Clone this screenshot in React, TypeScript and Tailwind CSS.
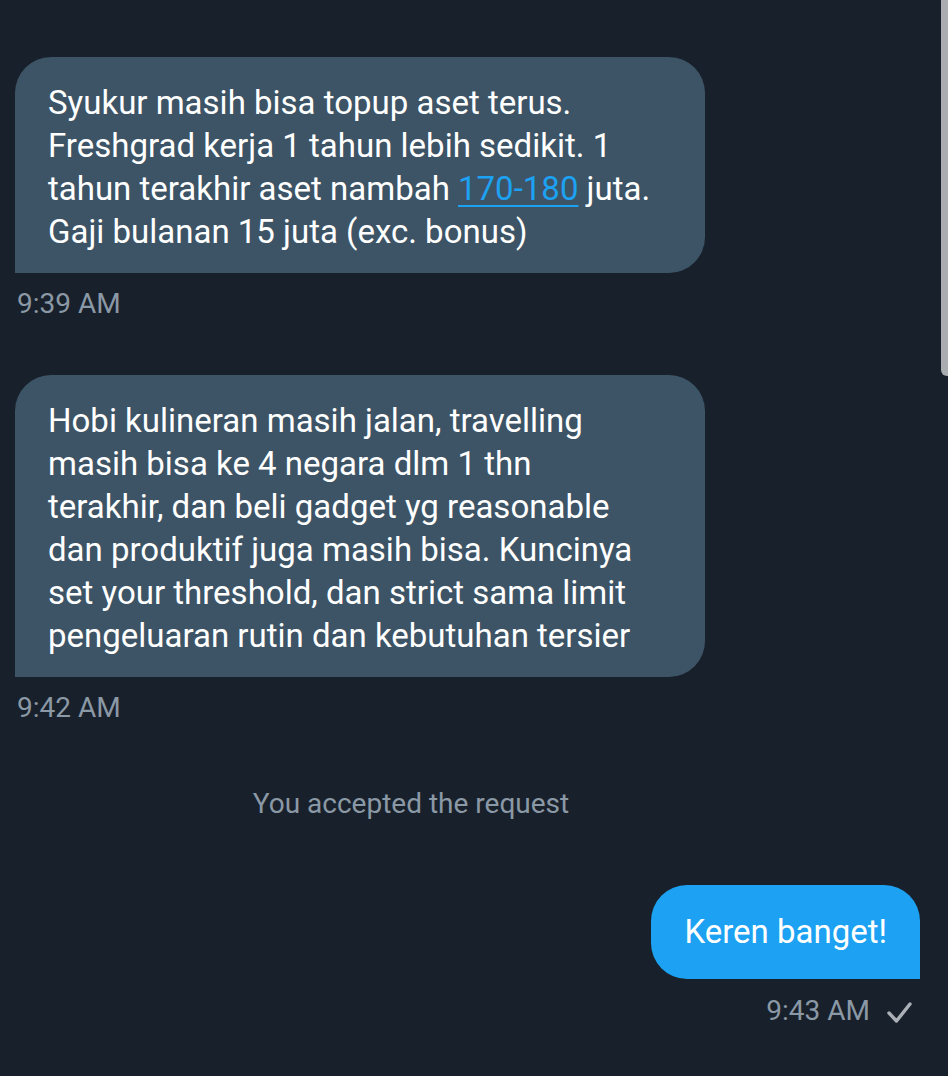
const font = { fontFamily: "Roboto, 'Noto Sans', sans-serif" };

function Incoming({ lines, time }: { lines: React.ReactNode[]; time: string }) {
  return (
    <div className="flex flex-col items-start">
      <div className="ml-[15px] w-[690px] rounded-[36px] rounded-bl-none bg-[#3d5466] pl-[33px] pr-[20px] pt-[24px] pb-[20px] text-[33px] leading-[43px] text-white">
        {lines.map((l, i) => (
          <div key={i} className="whitespace-nowrap">
            {l}
          </div>
        ))}
      </div>
      <div className="ml-[17px] mt-[13px] text-[28px] leading-[36px] text-[#8b98a5]">{time}</div>
    </div>
  );
}

export default function App() {
  return (
    <div style={font} className="relative h-[1076px] w-[948px] overflow-hidden bg-[#18212b]">
      {/* scroll indicator */}
      <div className="absolute right-0 top-0 h-[376px] w-[7px] rounded-bl-[6px] bg-[#a9acb0]" />

      <div className="flex flex-col pt-[57px]">
        <Incoming
          time="9:39 AM"
          lines={[
            "Syukur masih bisa topup aset terus.",
            "Freshgrad kerja 1 tahun lebih sedikit. 1",
            <>
              tahun terakhir aset nambah{" "}
              <span className="text-[#1da1f2] underline decoration-2 underline-offset-[5px]">170-180</span> juta.
            </>,
            "Gaji bulanan 15 juta (exc. bonus)",
          ]}
        />

        <div className="mt-[53px]">
          <Incoming
            time="9:42 AM"
            lines={[
              "Hobi kulineran masih jalan, travelling",
              "masih bisa ke 4 negara dlm 1 thn",
              "terakhir, dan beli gadget yg reasonable",
              "dan produktif juga masih bisa. Kuncinya",
              "set your threshold, dan strict sama limit",
              "pengeluaran rutin dan kebutuhan tersier",
            ]}
          />
        </div>

        <div className="mt-[60px] pr-[126px] text-center text-[28px] leading-[36px] text-[#8b98a5]">
          You accepted the request
        </div>

        <div className="mt-[63px] flex flex-col items-end pr-[28px]">
          <div className="flex h-[94px] items-center rounded-[36px] rounded-br-none bg-[#1da1f2] px-[33px] text-[33px] text-white">
            Keren banget!
          </div>
          <div className="mt-[14px] flex items-center gap-[17px] pr-[8px] text-[28px] leading-[36px] text-[#8b98a5]">
            <span>9:43 AM</span>
            <svg width="25" height="21" viewBox="0 0 25 21" fill="none" className="mt-[3px]">
              <path
                d="M2 11 L9.5 19 L23 2"
                stroke="#aab0b6"
                strokeWidth="3.4"
                strokeLinecap="round"
                strokeLinejoin="round"
              />
            </svg>
          </div>
        </div>
      </div>
    </div>
  );
}
